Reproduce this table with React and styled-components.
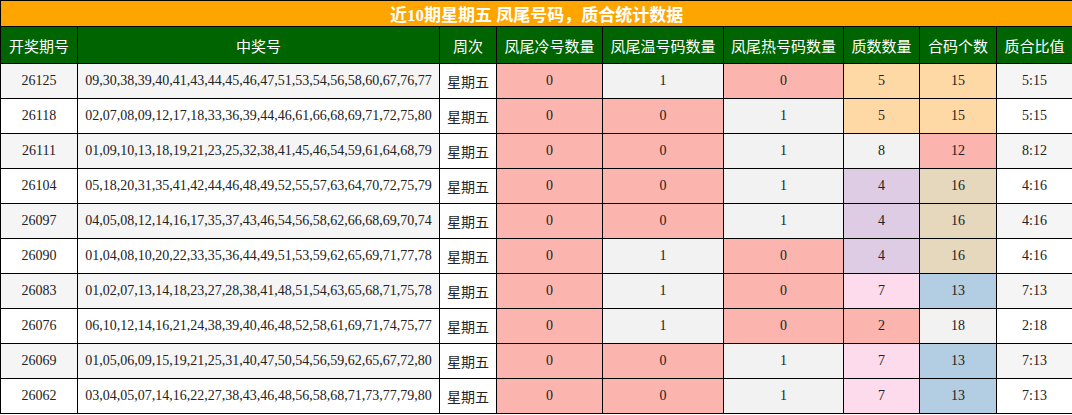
import React from 'react';
import styled, { createGlobalStyle } from 'styled-components';

const GlobalStyle = createGlobalStyle`
  html, body {
    margin: 0;
    padding: 0;
    background: #fff;
  }
`;

const Table = styled.table`
  width: 1072px;
  border-collapse: collapse;
  table-layout: fixed;
  font-family: "Liberation Serif", "Noto Sans CJK SC", serif;
  color: #222;
`;

const TitleCell = styled.th`
  height: 25px;
  padding: 0;
  background: #ffa500;
  color: #fff;
  font-size: 17px;
  font-weight: bold;
  border: 1px solid #000;
  text-align: center;
  vertical-align: middle;
`;

const HeadCell = styled.th`
  height: 36px;
  padding: 0;
  background: #006400;
  color: #fff;
  font-family: "Noto Sans CJK SC", sans-serif;
  font-size: 15px;
  font-weight: normal;
  border: 1px solid #000;
  text-align: center;
  vertical-align: middle;
`;

const Cell = styled.td`
  height: 34px;
  padding: 0;
  border: 1px solid #000;
  text-align: center;
  vertical-align: middle;
  font-size: 14px;
  background: ${(p) => p.$bg || 'transparent'};
`;

const WeekCell = styled(Cell)`
  font-family: "Noto Sans CJK SC", sans-serif;
  background: #fff;
`;

const Row = styled.tr`
  background: ${(p) => (p.$striped ? '#f5f5f5' : '#fff')};
`;

const colors = {
  p: '#fbb4ae',
  g: '#f2f2f2',
  o: '#fed9a6',
  u: '#decbe4',
  k: '#fddaec',
  b: '#b3cde3',
  e: '#e5d8bd',
};

const widths = [77, 362, 57, 106, 121, 120, 76, 77, 76];

const headers = ['开奖期号', '中奖号', '周次', '凤尾冷号数量', '凤尾温号码数量', '凤尾热号码数量', '质数数量', '合码个数', '质合比值'];

const rows = [
  ['26125', '09,30,38,39,40,41,43,44,45,46,47,51,53,54,56,58,60,67,76,77', ['0', 'p'], ['1', 'g'], ['0', 'p'], ['5', 'o'], ['15', 'o'], '5:15'],
  ['26118', '02,07,08,09,12,17,18,33,36,39,44,46,61,66,68,69,71,72,75,80', ['0', 'p'], ['0', 'p'], ['1', 'g'], ['5', 'o'], ['15', 'o'], '5:15'],
  ['26111', '01,09,10,13,18,19,21,23,25,32,38,41,45,46,54,59,61,64,68,79', ['0', 'p'], ['0', 'p'], ['1', 'g'], ['8', 'g'], ['12', 'p'], '8:12'],
  ['26104', '05,18,20,31,35,41,42,44,46,48,49,52,55,57,63,64,70,72,75,79', ['0', 'p'], ['0', 'p'], ['1', 'g'], ['4', 'u'], ['16', 'e'], '4:16'],
  ['26097', '04,05,08,12,14,16,17,35,37,43,46,54,56,58,62,66,68,69,70,74', ['0', 'p'], ['0', 'p'], ['1', 'g'], ['4', 'u'], ['16', 'e'], '4:16'],
  ['26090', '01,04,08,10,20,22,33,35,36,44,49,51,53,59,62,65,69,71,77,78', ['0', 'p'], ['1', 'g'], ['0', 'p'], ['4', 'u'], ['16', 'e'], '4:16'],
  ['26083', '01,02,07,13,14,18,23,27,28,38,41,48,51,54,63,65,68,71,75,78', ['0', 'p'], ['1', 'g'], ['0', 'p'], ['7', 'k'], ['13', 'b'], '7:13'],
  ['26076', '06,10,12,14,16,21,24,38,39,40,46,48,52,58,61,69,71,74,75,77', ['0', 'p'], ['1', 'g'], ['0', 'p'], ['2', 'p'], ['18', 'g'], '2:18'],
  ['26069', '01,05,06,09,15,19,21,25,31,40,47,50,54,56,59,62,65,67,72,80', ['0', 'p'], ['0', 'p'], ['1', 'g'], ['7', 'k'], ['13', 'b'], '7:13'],
  ['26062', '03,04,05,07,14,16,22,27,38,43,46,48,56,58,68,71,73,77,79,80', ['0', 'p'], ['0', 'p'], ['1', 'g'], ['7', 'k'], ['13', 'b'], '7:13'],
];

function App() {
  return (
    <>
      <GlobalStyle />
      <Table>
        <colgroup>
          {widths.map((w, i) => (
            <col key={i} style={{ width: w }} />
          ))}
        </colgroup>
        <thead>
          <tr>
            <TitleCell colSpan={9}>近10期星期五 凤尾号码，质合统计数据</TitleCell>
          </tr>
          <tr>
            {headers.map((h) => (
              <HeadCell key={h}>{h}</HeadCell>
            ))}
          </tr>
        </thead>
        <tbody>
          {rows.map(([issue, nums, cold, warm, hot, prime, comp, ratio], i) => (
            <Row key={issue} $striped={i % 2 === 0}>
              <Cell>{issue}</Cell>
              <Cell>{nums}</Cell>
              <WeekCell>星期五</WeekCell>
              {[cold, warm, hot, prime, comp].map(([v, c], j) => (
                <Cell key={j} $bg={colors[c]}>{v}</Cell>
              ))}
              <Cell>{ratio}</Cell>
            </Row>
          ))}
        </tbody>
      </Table>
    </>
  );
}

export default App;
